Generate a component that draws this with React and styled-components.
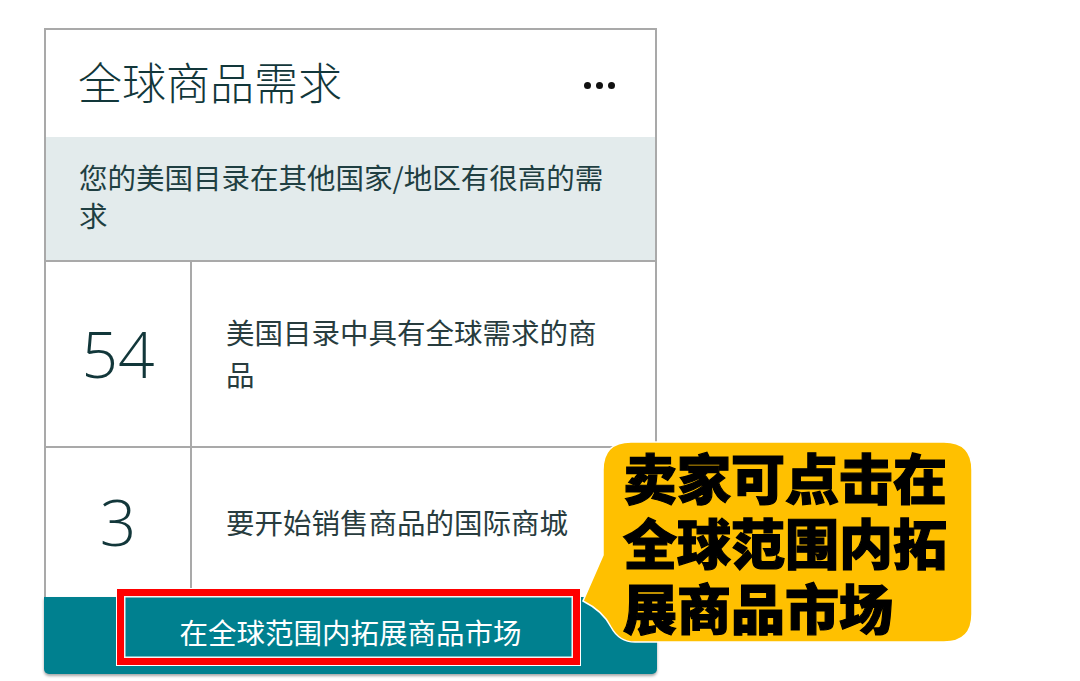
import React from 'react'
import styled, { createGlobalStyle } from 'styled-components'

const GlobalStyle = createGlobalStyle`
  html, body {
    margin: 0;
    padding: 0;
    background: #ffffff;
  }
  body {
    width: 1080px;
    height: 681px;
    overflow: hidden;
    font-family: "Noto Sans CJK SC", "Noto Sans", sans-serif;
  }
`

const stats = [
  { value: '54', label: '美国目录中具有全球需求的商品', height: 184 },
  { value: '3', label: '要开始销售商品的国际商城', height: 149 },
]

const Page = styled.div`
  display: flex;
  align-items: flex-start;
  padding: 28px 0 0 44px;
`

const Stage = styled.div`
  position: relative;
  width: 613px;
`

const Card = styled.div`
  border: 2px solid #a9a9a9;
  border-bottom: none;
  background: #fff;
`

const Header = styled.div`
  height: 107px;
  display: flex;
  align-items: center;
  justify-content: space-between;
  padding: 0 40px 5px 32px;
  box-sizing: border-box;
`

const Title = styled.h2`
  margin: 0;
  font-size: 44px;
  font-weight: 300;
  line-height: 1;
  color: #12373a;
`

const Dots = styled.div`
  display: flex;
  gap: 5px;
  margin-top: 8px;

  span {
    width: 7px;
    height: 7px;
    border-radius: 50%;
    background: #111;
  }
`

const Notice = styled.p`
  margin: 0;
  padding: 21px 39px 26px 33px;
  background: #e3ebec;
  border-bottom: 2px solid #a9a9a9;
  font-size: 28.5px;
  font-weight: 400;
  line-height: 38px;
  color: #1f3f42;
`

const StatRow = styled.div`
  display: grid;
  grid-template-columns: 144px 1fr;
  min-height: ${p => p.height}px;
  border-bottom: ${p => (p.last ? 'none' : '2px solid #a9a9a9')};
`

const StatValue = styled.div`
  display: flex;
  align-items: center;
  justify-content: center;
  font-family: "Open Sans", "Noto Sans", sans-serif;
  font-size: 64px;
  font-weight: 300;
  color: #12373a;
  padding-bottom: 2px;
`

const StatLabel = styled.div`
  display: flex;
  align-items: center;
  border-left: 2px solid #a9a9a9;
  padding: 0 44px 2px 34px;
  font-size: 28.5px;
  font-weight: 400;
  line-height: 42px;
  color: #283c3e;
`

const ExpandButton = styled.button`
  display: block;
  width: 100%;
  height: 77px;
  border: none;
  border-radius: 0 0 5px 5px;
  background: #00808f;
  box-shadow: 0 2px 3px rgba(0, 0, 0, 0.35);
  color: #fff;
  font-family: "Noto Sans CJK SC", sans-serif;
  font-size: 28.5px;
  font-weight: 400;
  padding: 0 0 8px;
  cursor: pointer;
`

const Highlight = styled.div`
  position: absolute;
  left: 73px;
  top: 561px;
  width: 463px;
  height: 76px;
  box-sizing: border-box;
  border: 7px solid #ff0000;
  box-shadow: 0 0 0 1px #fff, inset 0 0 0 1.5px #f4f4f4;
  pointer-events: none;
`

const Callout = styled.div`
  position: absolute;
  left: 537px;
  top: 413px;
  width: 392px;
  height: 202px;
`

const CalloutShape = styled.svg`
  position: absolute;
  inset: 0;
  overflow: visible;
`

const CalloutText = styled.p`
  position: relative;
  margin: 0;
  width: 330px;
  padding: 3px 0 0 42px;
  font-family: "Noto Sans CJK SC", sans-serif;
  font-size: 54px;
  font-weight: 900;
  line-height: 65px;
  color: #000;
  -webkit-text-stroke: 1.2px #000;
`

const bubblePath =
  'M50 1 H363 Q391 1 391 29 V173 Q391 201 363 201 H54 Q38 201 30 186 C24 174 14 166 2 160 L22 114 V29 Q22 1 50 1 Z'

export default function App() {
  return (
    <Page>
      <GlobalStyle />
      <Stage>
        <Card>
          <Header>
            <Title>全球商品需求</Title>
            <Dots>
              <span />
              <span />
              <span />
            </Dots>
          </Header>
          <Notice>您的美国目录在其他国家/地区有很高的需求</Notice>
          {stats.map((s, i) => (
            <StatRow key={s.value} height={s.height} last={i === stats.length - 1}>
              <StatValue>{s.value}</StatValue>
              <StatLabel>{s.label}</StatLabel>
            </StatRow>
          ))}
        </Card>
        <ExpandButton>在全球范围内拓展商品市场</ExpandButton>
        <Highlight />
        <Callout>
          <CalloutShape width="392" height="202" viewBox="0 0 392 202">
            <path d={bubblePath} fill="#ffc000" stroke="#ffffff" strokeWidth="1.5" />
          </CalloutShape>
          <CalloutText>卖家可点击在全球范围内拓展商品市场</CalloutText>
        </Callout>
      </Stage>
    </Page>
  )
}
